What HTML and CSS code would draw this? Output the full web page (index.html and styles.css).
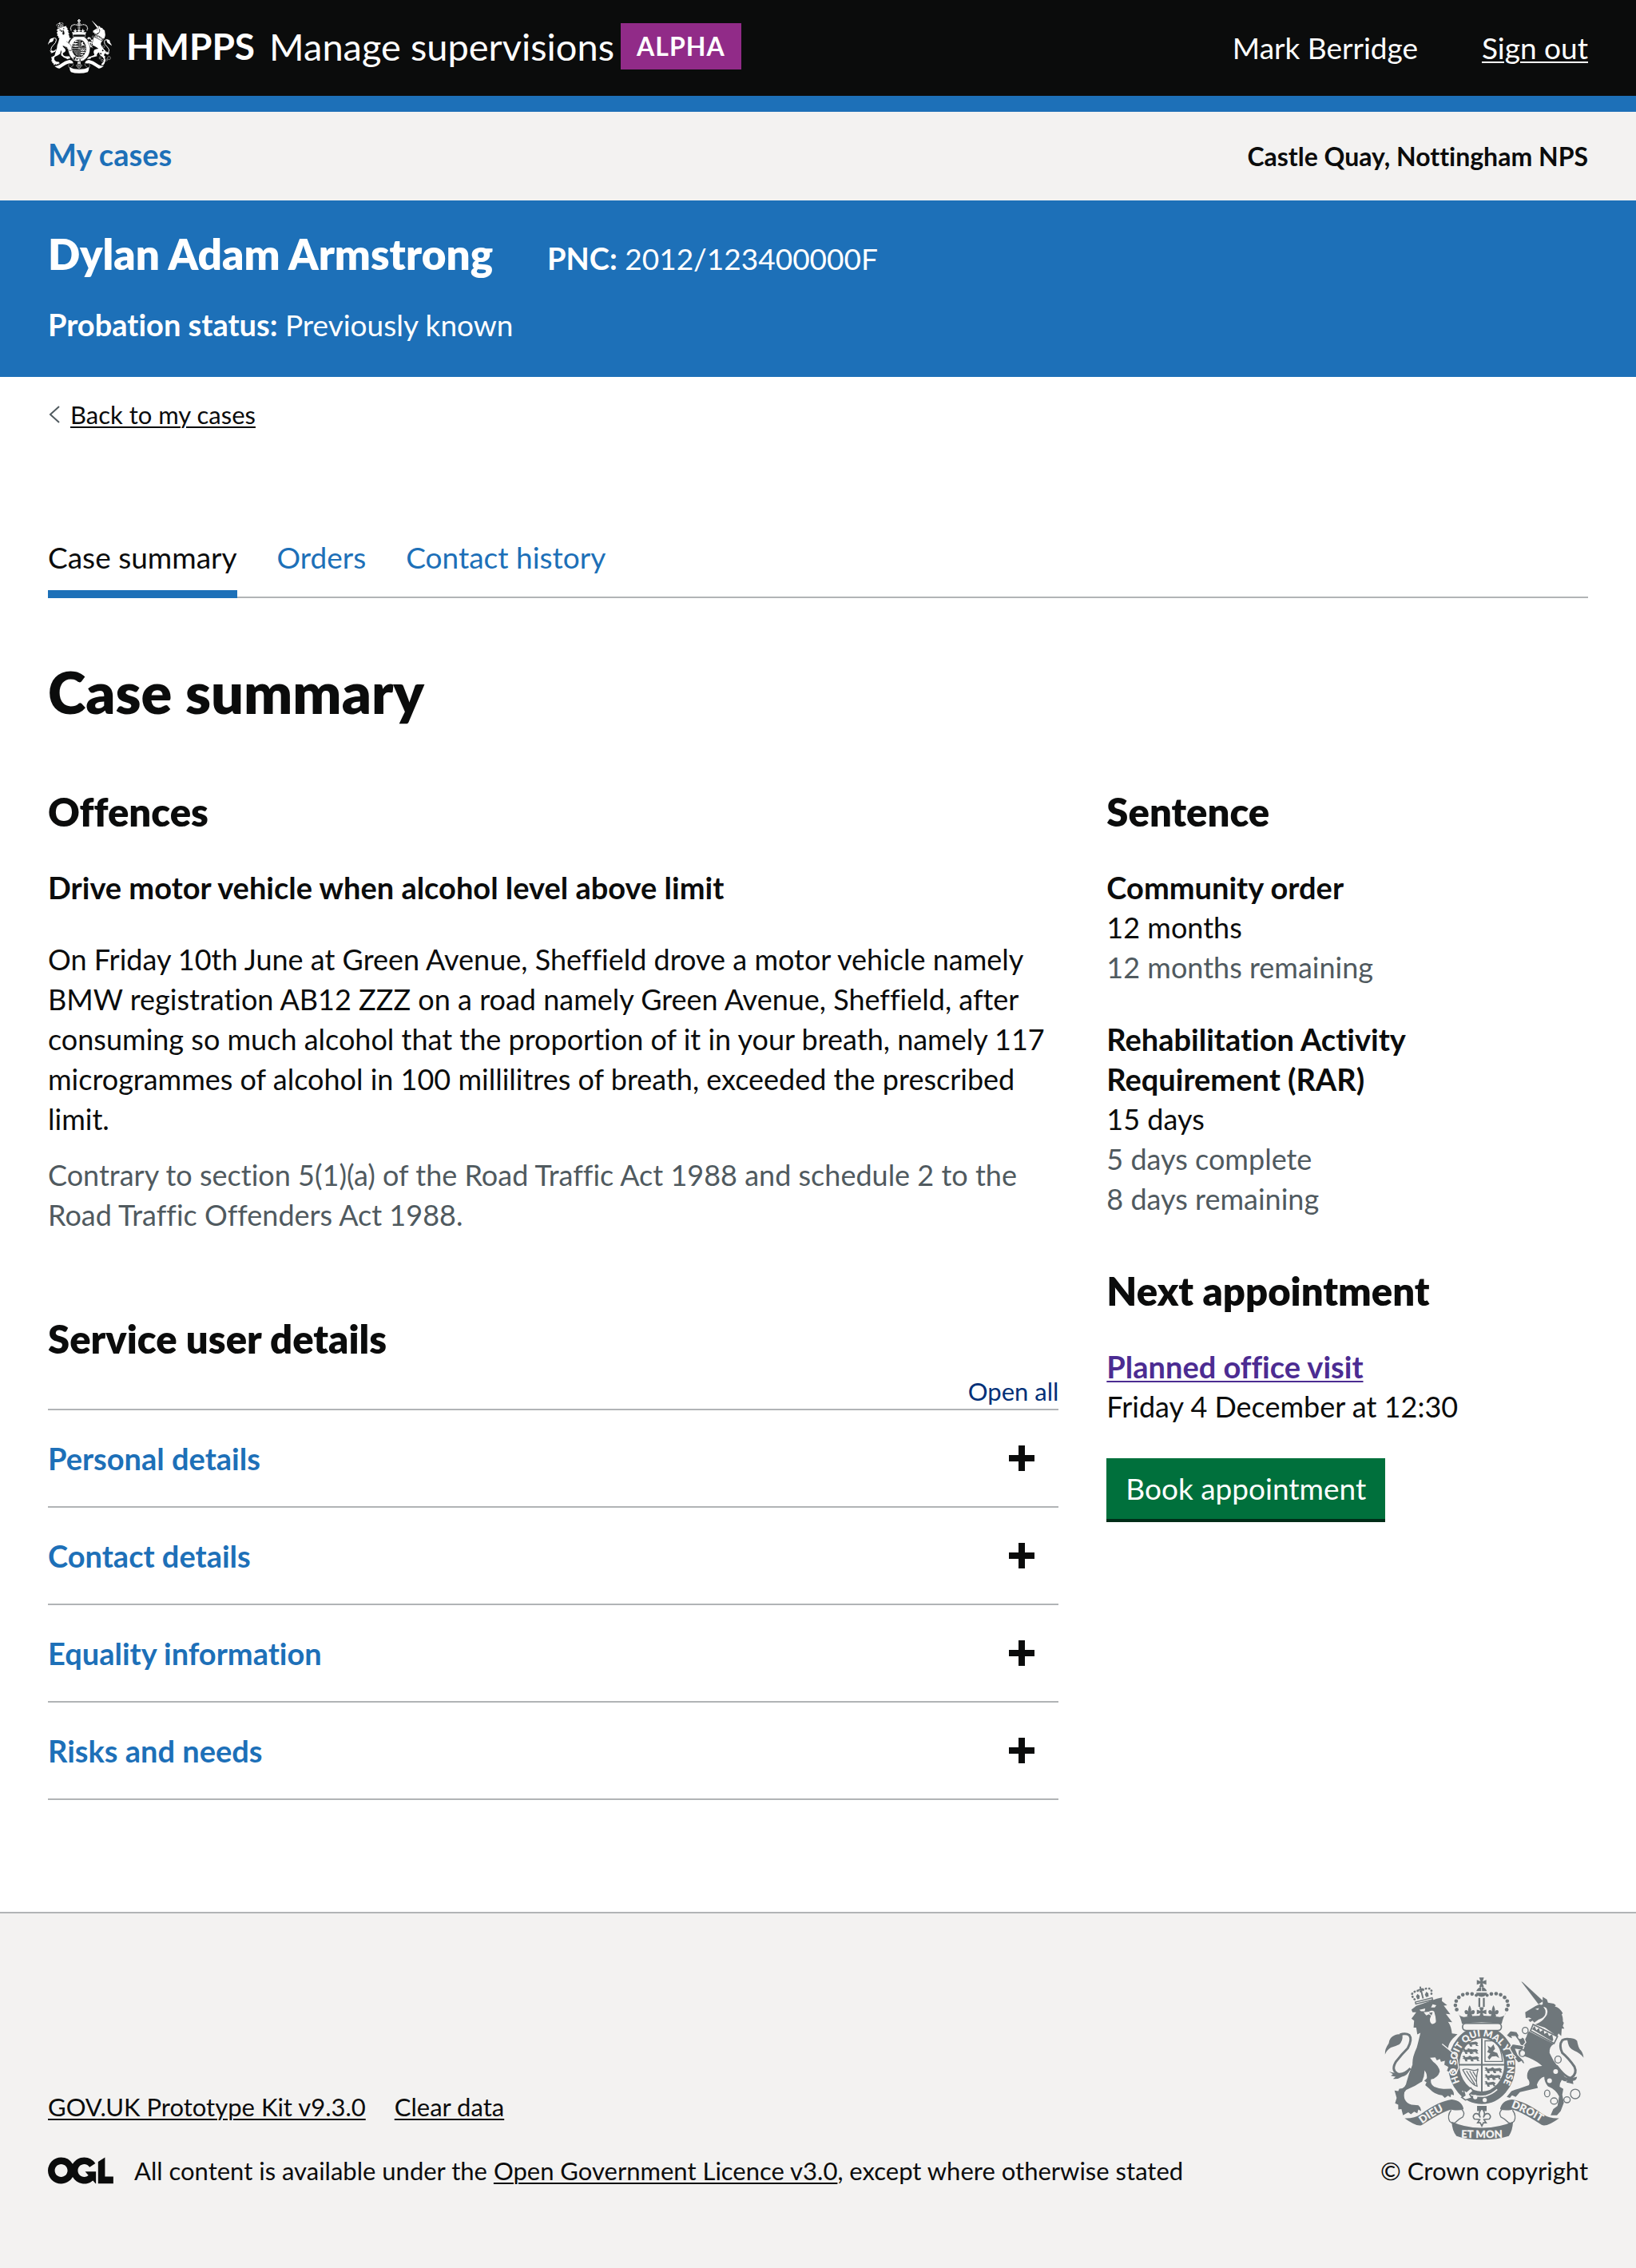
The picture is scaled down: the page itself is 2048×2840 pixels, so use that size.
FILE: index.html
```
<!DOCTYPE html>
<html lang="en">
<head>
<meta charset="utf-8">
<meta name="viewport" content="width=device-width, initial-scale=1">
<title>Case summary – Manage supervisions</title>
<link rel="stylesheet" href="styles.css">
</head>
<body>
<svg class="sprite" aria-hidden="true">
  <defs>
    <g id="crest-dots">
      <circle cx="441" cy="174" r="6"/><circle cx="425" cy="169" r="7"/><circle cx="407" cy="168" r="7"/><circle cx="390" cy="172" r="7"/><circle cx="375" cy="182" r="7"/><circle cx="365" cy="196" r="7"/><circle cx="362" cy="212" r="7"/><circle cx="367" cy="228" r="7"/>
    </g>
    <g id="crest-fleur">
      <path d="M0-24Q-9-10-4 4Q-6-6-14-6Q-22-4-18 6Q-14 12-8 8L-10 18H10L8 8Q14 12 18 6Q22-4 14-6Q6-6 4 4Q9-10 0-24Z"/>
    </g>
    <g id="crest-cross">
      <path d="M-4-4L-9-18H9L4-4L18-9V9L4 4L9 18H-9L-4 4L-18 9V-9Z"/>
    </g>
    <g id="crest-lions">
      <path d="M2 3L10 0L14 6L36 3L44 8L40 14L46 20H36L34 14L20 15L22 22H14L10 13L2 12L8 8Z"/>
    </g>
    <g id="crest-ribbon">
      <path d="M170 639Q205 641 232 623Q300 574 348 568Q388 572 393 605Q374 612 350 607Q330 604 236 664Q218 674 170 639Z"/>
      <path class="line" d="M346 608Q330 630 340 650Q350 662 362 655Q376 640 390 634Q400 618 386 606"/>
    </g>
    <symbol id="crest" viewBox="94 106 754 616" preserveAspectRatio="none">
      <!-- lion -->
      <path class="tail" d="M192 450Q165 478 142 470Q118 456 138 424Q160 396 182 374Q200 340 188 325Q175 316 152 323"/>
      <path d="M96 398Q94 378 110 356Q112 332 134 324Q150 318 162 324Q164 345 150 360Q134 368 118 372Q102 382 96 398Z"/>
      <path d="M111 462Q124 468 140 466Q165 476 190 456Q180 478 160 482Q146 492 126 490L136 482L118 478L126 472Z"/>
      <path d="M196 228L214 214L292 187L312 182L311 196L331 212L318 213L343 246L326 244L350 276L334 274Q346 288 349 318L370 321L352 338Q336 356 334 376L364 400Q372 420 374 448L366 468L360 456L352 468L346 455L338 466L328 460L333 446L318 438L320 424L306 428L305 414L292 420L286 409L266 410L278 425Q300 440 303 462Q296 486 270 492Q266 510 282 520Q306 530 322 528L346 527Q358 538 356 552L346 548L344 560L334 554L322 562L312 552Q286 552 262 526L248 514L253 502L244 498L254 488Q256 470 245 458Q246 480 236 500Q208 520 176 532Q164 542 170 566Q178 584 196 588L222 590Q234 600 232 612L222 606L218 620L206 614L194 624L184 616L164 628L158 604L146 606L146 588L134 582L140 562L132 534L146 536L150 527Q174 528 178 500Q186 470 200 436Q198 410 216 372Q222 350 230 316L218 322L214 296L204 296L206 270L196 262Q204 252 214 238L200 238Z"/>
      <path class="gap" d="M226 229L248 224L246 234L232 234ZM270 220L276 208L290 212L284 220ZM242 238L262 236Q275 228 282 236Q290 262 288 276Q282 284 272 282Q264 278 266 262L270 252L262 246L252 250Z"/>
      <path d="M262 240L276 238L272 250Z"/>
      <g transform="rotate(-14 238 178)">
        <path d="M204 190H274V202H204Z"/>
        <path class="beads" d="M206 182Q192 158 212 154Q228 150 238 160Q248 150 264 154Q284 158 270 182"/>
        <path d="M235 140H241V148H248V154H241V186H235V154H228V148H235ZM214 172L222 164L228 174L224 184H216ZM248 174L256 164L262 172L260 184H250Z"/>
        <path class="gap-line thin" d="M208 196H270"/>
      </g>

      <!-- unicorn -->
      <path class="tail" d="M744 440Q780 488 800 486Q824 470 812 444Q790 412 766 392Q752 362 766 344Q780 336 800 342"/>
      <path d="M784 338Q808 332 822 346Q826 368 832 378Q844 388 847 410Q832 392 812 384Q792 376 788 356Z"/>
      <path d="M752 462Q770 486 796 488L822 482Q820 496 806 498L808 510L794 506L782 504L784 496L764 488Z"/>
      <path d="M611 122L616 124L694 196L676 208Z"/>
      <path d="M692 180L708 190L712 202L734 206L742 212L738 216Q756 220 768 242L764 246Q770 262 768 272L772 278L768 290L774 300L764 300L762 328L752 318L746 330Q732 318 700 296L664 284Q688 276 702 256Q716 240 706 222Q690 210 662 230Q672 216 692 208Z"/>
      <path d="M680 208Q664 214 650 224L626 238L628 260L640 258L650 262L638 266L644 275L654 270L660 277Q676 264 690 260Q706 250 702 230Q694 212 680 208Z"/>
      <path class="gap" d="M664 226L678 222L674 230Z"/>
      <path class="collar" d="M656 284L748 330L735 356L646 308Z"/>
      <path d="M652 302L661 290L668 306L678 298L682 312L696 304L698 320L710 314L716 328L728 322L732 342L728 348Z"/>
      <path d="M640 310L734 358Q716 368 718 392Q730 420 750 444Q768 466 784 500Q772 500 764 494Q756 506 756 520L770 528L766 550L772 580L760 612L746 628H722L732 604L748 592L754 556Q742 530 712 518Q698 502 698 482Q680 486 670 512L674 524Q640 532 606 540L590 558L576 552L568 562L556 558L574 536Q600 528 640 514Q646 502 634 488Q630 466 644 452Q660 444 690 441Q672 424 640 410L606 398L600 380L612 356Q630 340 634 320Z"/>

      <!-- crown -->
      <use href="#crest-cross" x="461" y="125"/>
      <path d="M441 158Q446 144 461 142Q476 144 481 158ZM440 164H482Q478 178 461 180Q444 178 440 164ZM449 184H456V218H449ZM466 184H473V218H466Z"/>
      <path class="gap-line thin" d="M461 142V160"/>
      <use href="#crest-dots"/>
      <use href="#crest-dots" transform="translate(923 0) scale(-1 1)"/>
      <path d="M370 238Q382 256 387 282Q460 268 537 282Q542 256 554 238Q550 254 530 256Q460 246 394 256Q376 254 370 238Z"/>
      <path d="M386 258Q460 248 538 258L535 282Q460 270 388 282Z"/>
      <use href="#crest-fleur" x="416" y="236"/>
      <use href="#crest-fleur" x="506" y="236"/>
      <use href="#crest-cross" x="461" y="237"/>

      <!-- garter and shield -->
      <ellipse class="garter" cx="462" cy="438" rx="130" ry="150"/>
      <rect class="collar" x="389" y="280" width="147" height="27" rx="13"/>
      <ellipse class="shield" cx="462" cy="437" rx="87" ry="103"/>
      <clipPath id="shield-clip"><ellipse cx="462" cy="437" rx="80" ry="96"/></clipPath>
      <g clip-path="url(#shield-clip)">
        <use href="#crest-lions" x="404" y="346"/><use href="#crest-lions" x="386" y="374"/><use href="#crest-lions" x="404" y="374"/><use href="#crest-lions" x="386" y="402"/><use href="#crest-lions" x="408" y="402"/>
        <use href="#crest-lions" x="470" y="446"/><use href="#crest-lions" x="494" y="446"/><use href="#crest-lions" x="470" y="472"/><use href="#crest-lions" x="490" y="472"/><use href="#crest-lions" x="470" y="498"/>
        <path class="line" d="M474 346H512Q536 370 540 424H474Z"/>
        <path d="M484 364L496 372L506 360L512 376L504 386L520 392L528 412L516 404L500 406L490 418L484 408L494 394L482 388L488 378Z"/>
        <path class="line" d="M390 456Q400 450 420 456Q440 462 448 452Q438 490 444 518Q420 512 390 456ZM404 460L436 512M416 460L440 500M428 462L442 484"/>
      </g>
      <path class="line bar" d="M462 336V540M374 437H550"/>
      <path class="gap-line" d="M388 536Q430 562 478 554Q500 548 520 530"/>
      <path class="collar" d="M392 530L404 538L420 524L430 536L416 548L424 562L400 570L386 560L398 552Z"/>
      <g class="gap"><circle cx="437" cy="559" r="8"/><circle cx="473" cy="570" r="8"/></g>

      <!-- front limbs and chain, over the garter -->
      <path class="limb" d="M312 358L364 400Q372 420 374 448L366 468L360 456L352 468L346 455L338 466L328 460L333 446L318 438L320 424L306 428L302 416"/>
      <path class="limb" d="M554 326L570 308L594 312L602 324L622 336L628 352L612 372L600 346L588 330L576 330L580 340L566 334Z"/>
      <path class="limb" d="M566 374L578 358L606 362L622 366L616 382L590 378L598 398L620 420L626 436L614 430L612 424L600 430L584 410L590 408L580 398Z"/>
      <g class="gap"><circle cx="607" cy="331" r="8"/><circle cx="616" cy="393" r="9"/><circle cx="741" cy="462" r="9"/><circle cx="718" cy="497" r="9"/></g>
      <g class="chain">
        <ellipse cx="626" cy="307" rx="11" ry="12"/><ellipse cx="616" cy="393" rx="13" ry="13"/><ellipse cx="750" cy="417" rx="12" ry="13"/><ellipse cx="709" cy="545" rx="10" ry="13"/><ellipse cx="735" cy="574" rx="13" ry="12"/><ellipse cx="784" cy="569" rx="12" ry="11"/><circle cx="815" cy="547" r="18"/>
      </g>

      <!-- fleur-de-lis and ribbons -->
      <path d="M444 592H480V612H444Z"/>
      <path class="collar" d="M462 602Q446 618 456 636Q450 618 436 622Q424 632 434 642Q446 642 454 644L446 656H456L462 668L468 656H478L470 644Q478 642 490 642Q500 632 488 622Q474 618 468 636Q478 618 462 602Z"/>
      <use href="#crest-ribbon"/>
      <use href="#crest-ribbon" transform="translate(924 0) scale(-1 1)"/>
      <path d="M348 652Q400 676 462 675Q524 676 580 652Q578 688 564 706Q520 720 462 720Q404 720 366 706Q350 688 348 652Z"/>
    </symbol>
  </defs>
</svg>

<header class="header">
  <div class="brand">
    <svg class="brand-crest" aria-hidden="true"><use href="#crest"/></svg>
    <strong class="brand-org">HMPPS</strong>
    <span class="brand-service">Manage supervisions</span>
    <strong class="tag">ALPHA</strong>
  </div>
  <div class="account">
    <span>Mark Berridge</span>
    <a href="#sign-out">Sign out</a>
  </div>
</header>

<nav class="primary-nav" aria-label="Primary">
  <a class="primary-link" href="#cases">My cases</a>
  <strong class="location">Castle Quay, Nottingham NPS</strong>
</nav>

<section class="case-banner" aria-label="Case">
  <div class="case-identity">
    <h2 class="case-name">Dylan Adam Armstrong</h2>
    <p><strong>PNC:</strong> 2012/123400000F</p>
  </div>
  <p><strong>Probation status:</strong> Previously known</p>
</section>

<main class="main">
  <a class="back-link" href="#cases">
    <svg class="back-icon" viewBox="0 0 14 22" aria-hidden="true"><path d="M13 1L2 11L13 21"/></svg>
    <span>Back to my cases</span>
  </a>

  <nav class="tabs" aria-label="Case sections">
    <a class="tab tab-current" href="#summary" aria-current="page">Case summary</a>
    <a class="tab" href="#orders">Orders</a>
    <a class="tab" href="#contacts">Contact history</a>
  </nav>

  <h1>Case summary</h1>

  <div class="columns">
    <div class="column-main">
      <h2>Offences</h2>
      <h3 class="offence-title">Drive motor vehicle when alcohol level above limit</h3>
      <p>On Friday 10th June at Green Avenue, Sheffield drove a motor vehicle namely BMW registration AB12 ZZZ on a road namely Green Avenue, Sheffield, after consuming so much alcohol that the proportion of it in your breath, namely 117 microgrammes of alcohol in 100 millilitres of breath, exceeded the prescribed limit.</p>
      <p class="secondary legislation">Contrary to section 5(1)(a) of the Road Traffic Act 1988 and schedule 2 to the Road Traffic Offenders Act 1988.</p>

      <section class="details">
        <h2>Service user details</h2>
        <div class="accordion-controls"><button class="open-all" type="button">Open all</button></div>
        <h3 class="accordion-heading"><button class="accordion-button" type="button" aria-expanded="false">Personal details<span class="plus"></span></button></h3>
        <h3 class="accordion-heading"><button class="accordion-button" type="button" aria-expanded="false">Contact details<span class="plus"></span></button></h3>
        <h3 class="accordion-heading"><button class="accordion-button" type="button" aria-expanded="false">Equality information<span class="plus"></span></button></h3>
        <h3 class="accordion-heading"><button class="accordion-button" type="button" aria-expanded="false">Risks and needs<span class="plus"></span></button></h3>
      </section>
    </div>

    <aside class="column-side">
      <section>
        <h2>Sentence</h2>
        <div class="entries">
          <div>
            <h3>Community order</h3>
            <p>12 months</p>
            <p class="secondary">12 months remaining</p>
          </div>
          <div>
            <h3>Rehabilitation Activity Requirement (RAR)</h3>
            <p>15 days</p>
            <p class="secondary">5 days complete</p>
            <p class="secondary">8 days remaining</p>
          </div>
        </div>
      </section>
      <section>
        <h2>Next appointment</h2>
        <div class="entries">
          <div>
            <h3><a class="visited" href="#appointment">Planned office visit</a></h3>
            <p>Friday 4 December at 12:30</p>
          </div>
          <button class="button" type="button">Book appointment</button>
        </div>
      </section>
    </aside>
  </div>
</main>

<footer class="footer">
  <div class="footer-meta">
    <div class="footer-links">
      <a href="#kit">GOV.UK Prototype Kit v9.3.0</a>
      <a href="#clear">Clear data</a>
    </div>
    <div class="licence">
      <svg class="ogl" viewBox="0 0 484 196" role="img" aria-label="OGL"><path d="M421.500 142.800V.1l-50.700 32.300v161.100h112.400v-50.700zm-122.300-9.600A47.120 47.120 0 0 1 221 97.800c0-26 21.100-47.100 47.100-47.100 16.700 0 31.400 8.700 39.700 21.800l42.700-27.200A97.630 97.630 0 0 0 268.100 0c-36.500 0-68.300 20.100-85.100 49.700A98 98 0 0 0 97.800 0C43.900 0 0 43.900 0 97.800s43.900 97.800 97.800 97.800c36.500 0 68.300-20.100 85.100-49.700a97.760 97.760 0 0 0 149.600 25.400l19.400 22.200h3v-87.800h-80l24.300 27.500zM97.800 145c-26 0-47.100-21.100-47.100-47.100s21.100-47.100 47.100-47.100 47.100 21.100 47.100 47.100S123.800 145 97.800 145"/></svg>
      <span>All content is available under the <a href="#licence">Open Government Licence v3.0</a>, except where otherwise stated</span>
    </div>
  </div>
  <div class="copyright">
    <svg class="footer-crest" viewBox="94 106 754 616" aria-hidden="true">
      <use href="#crest" x="94" y="106" width="754" height="616"/>
      <defs>
        <path id="motto-arc" d="M381 507A97 114 0 1 1 532 522"/>
        <path id="dieu-arc" d="M236 660Q290 620 345 598"/>
        <path id="droit-arc" d="M572 598Q640 622 700 664"/>
        <path id="mon-arc" d="M360 711Q462 717 564 711"/>
      </defs>
      <g class="motto">
        <text class="motto-ring"><textPath href="#motto-arc" startOffset="1%">HO SOIT QUI MAL Y PENSE</textPath></text>
        <text><textPath href="#dieu-arc">DIEU</textPath></text>
        <text><textPath href="#droit-arc">DROIT</textPath></text>
        <text><textPath href="#mon-arc" startOffset="50%" text-anchor="middle">ET MON</textPath></text>
      </g>
    </svg>
    <span>© Crown copyright</span>
  </div>
</footer>
</body>
</html>
```
FILE: styles.css
```
:root {
  --black: #0b0c0c;
  --white: #ffffff;
  --blue: #1d70b8;
  --dark-blue: #003078;
  --grey-light: #f3f2f1;
  --grey-mid: #b1b4b6;
  --grey-text: #505a5f;
  --crest-grey: #6f777b;
  --purple-link: #4c2c92;
  --tag: #912b88;
  --green: #00703c;
  --green-shadow: #002d18;
  --gutter: 60px;
}

* {
  box-sizing: border-box;
}

body {
  margin: 0;
  background: var(--white);
  color: var(--black);
  font-family: Lato, "Liberation Sans", sans-serif;
  font-size: 36px;
  line-height: 50px;
  font-variant-ligatures: none;
}

h1, h2, h3, p {
  margin: 0;
}

h1 {
  margin: 72px 0 75px;
  font-size: 72px;
  font-weight: 800;
  line-height: 90px;
}

h2 {
  font-size: 49px;
  font-weight: 800;
  line-height: 60px;
}

h3 {
  font-size: 38px;
  line-height: 50px;
}

a {
  color: inherit;
  text-decoration-thickness: 2px;
  text-underline-offset: 3px;
}

button {
  border: 0;
  padding: 0;
  background: none;
  font: inherit;
  font-variant-ligatures: none;
  cursor: pointer;
}

.sprite {
  display: none;
}

/* Header */

.header {
  display: flex;
  justify-content: space-between;
  align-items: center;
  min-height: 140px;
  padding: 0 var(--gutter);
  border-bottom: 20px solid var(--blue);
  background: var(--black);
  color: var(--white);
}

.brand {
  display: flex;
  align-items: center;
  padding-bottom: 4px;
  font-size: 47px;
  line-height: 60px;
}

.brand-crest {
  width: 80px;
  height: 68px;
  margin-right: 18px;
  color: var(--white);
  --gap: var(--black);
}

.brand-org {
  margin-right: 18px;
  font-size: 46px;
}

.tag {
  margin-left: 8px;
  padding: 4px 20px;
  background: var(--tag);
  font-size: 32px;
  line-height: 50px;
  letter-spacing: 1px;
}

.account {
  display: flex;
  gap: 80px;
  font-size: 37px;
}

/* Primary navigation */

.primary-nav {
  display: flex;
  justify-content: space-between;
  align-items: baseline;
  padding: 28px var(--gutter) 30px;
  background: var(--grey-light);
}

.primary-link {
  color: var(--blue);
  font-size: 38px;
  font-weight: 700;
  text-decoration: none;
}

.location {
  font-size: 32px;
}

/* Case banner */

.case-banner {
  padding: 37px var(--gutter) 40px;
  background: var(--blue);
  color: var(--white);
  font-size: 37px;
}

.case-identity {
  display: flex;
  align-items: baseline;
  gap: 68px;
  margin-bottom: 32px;
}

.case-name {
  font-size: 53px;
}

.case-banner strong {
  font-size: 38px;
}

/* Main content */

.main {
  padding: 27px var(--gutter) 140px;
}

.back-link {
  display: flex;
  align-items: center;
  gap: 12px;
  width: fit-content;
  margin-bottom: 134px;
  font-size: 31px;
  line-height: 40px;
  text-decoration: none;
}

.back-link span {
  text-decoration: underline 2px;
  text-underline-offset: 3px;
}

.back-icon {
  width: 16px;
  height: 22px;
  fill: none;
  stroke: var(--grey-text);
  stroke-width: 2;
}

.tabs {
  display: flex;
  gap: 50px;
  box-shadow: inset 0 -2px var(--grey-mid);
  font-size: 37px;
}

.tab {
  padding-bottom: 16px;
  border-bottom: 10px solid transparent;
  color: var(--blue);
  text-decoration: none;
}

.tab-current {
  border-color: var(--blue);
  color: var(--black);
}

.columns {
  display: flex;
  gap: var(--gutter);
}

.column-main {
  flex: none;
  width: calc(200% / 3 - 20px);
}

.column-side {
  flex: 1;
  display: flex;
  flex-direction: column;
  gap: 60px;
}

.offence-title {
  margin: 40px 0;
}

.secondary {
  color: var(--grey-text);
}

.legislation {
  margin-top: 20px;
}

.details {
  margin-top: 100px;
}

.entries {
  display: flex;
  flex-direction: column;
  align-items: flex-start;
  gap: 40px;
  margin-top: 40px;
}

.column-side h3 {
  max-width: 440px;
}

.visited {
  color: var(--purple-link);
}

.button {
  padding: 13px 24px;
  background: var(--green);
  box-shadow: 0 4px var(--green-shadow);
  color: var(--white);
  font-size: 37px;
}

/* Accordion */

.accordion-controls {
  display: flex;
  justify-content: flex-end;
  margin-top: 16px;
  padding-bottom: 2px;
}

.open-all {
  color: var(--dark-blue);
  font-size: 31px;
  line-height: 40px;
}

.accordion-heading {
  border-top: 2px solid var(--grey-mid);
}

.accordion-heading:last-child {
  border-bottom: 2px solid var(--grey-mid);
}

.accordion-button {
  display: flex;
  justify-content: space-between;
  align-items: center;
  width: 100%;
  padding: 35px 30px 35px 0;
  color: var(--blue);
  text-align: left;
}

.plus {
  width: 32px;
  height: 32px;
  background:
    linear-gradient(var(--black), var(--black)) center / 32px 8px no-repeat,
    linear-gradient(var(--black), var(--black)) center / 8px 32px no-repeat;
}

/* Footer */

.footer {
  display: flex;
  justify-content: space-between;
  align-items: flex-end;
  padding: 80px var(--gutter) 102px;
  border-top: 2px solid var(--grey-mid);
  background: var(--grey-light);
  font-size: 31px;
  line-height: 40px;
}

.footer-links {
  display: flex;
  gap: 36px;
  margin-bottom: 40px;
}

.licence {
  display: flex;
  align-items: center;
  gap: 26px;
}

.ogl {
  width: 82px;
  height: 34px;
  fill: var(--black);
}

.copyright {
  display: flex;
  flex-direction: column;
  align-items: center;
  gap: 18px;
}

.footer-crest {
  width: 250px;
  height: 204px;
  color: var(--crest-grey);
  --gap: var(--grey-light);
}

/* Crest artwork */

.brand-crest,
.footer-crest {
  fill: currentColor;
}

.line,
.tail,
.beads,
.chain {
  fill: none;
  stroke: currentColor;
  stroke-width: 4;
}

.bar {
  stroke-width: 6;
}

.tail {
  stroke-width: 9;
}

.beads {
  stroke-width: 8;
  stroke-linecap: round;
  stroke-dasharray: 1 11;
}

.gap,
.motto {
  fill: var(--gap);
}

.gap-line {
  fill: none;
  stroke: var(--gap);
  stroke-width: 5;
}

.thin {
  stroke-width: 3;
}

.garter {
  stroke: var(--gap);
  stroke-width: 6;
}

.limb {
  stroke: var(--gap);
  stroke-width: 4;
}

.collar,
.shield {
  fill: var(--gap);
  stroke: currentColor;
  stroke-width: 5;
}

.motto {
  font-size: 40px;
  font-weight: 800;
}

.motto-ring {
  font-size: 36px;
}
```
